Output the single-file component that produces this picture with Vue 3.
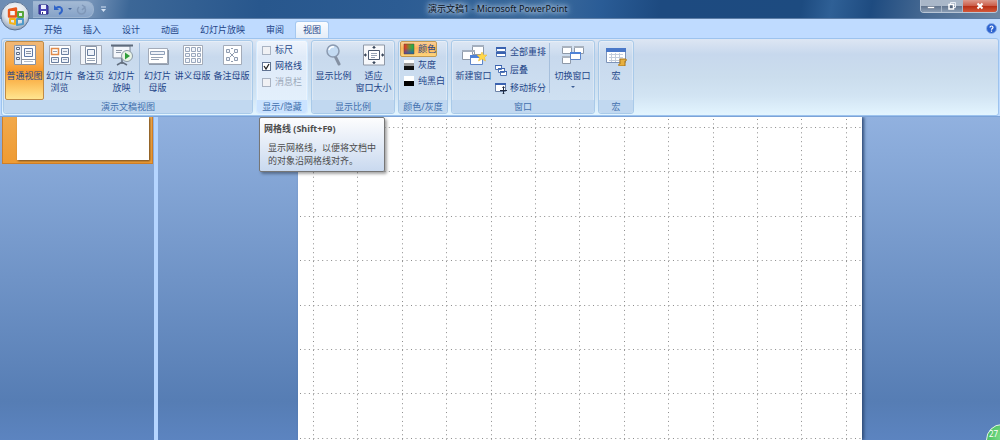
<template>
  <div class="window">
    <header class="titlebar">
      <button class="office" aria-label="Office">
        <svg width="30" height="30" viewBox="0 0 30 30">
          <defs>
            <radialGradient id="orb" cx="50%" cy="35%" r="65%">
              <stop offset="0" stop-color="#ffffff" />
              <stop offset="0.6" stop-color="#dde3ea" />
              <stop offset="1" stop-color="#8f9fb5" />
            </radialGradient>
          </defs>
          <circle cx="15" cy="15" r="14" fill="url(#orb)" stroke="#5d7596" />
          <g fill="none" stroke-width="2.4" stroke-linejoin="round">
            <path d="M9 9l7-1.500v8l-7 0z" stroke="#e8591c" />
            <path d="M18 11h5v5h-5z" stroke="#58a63c" stroke-width="2" />
            <path d="M10 18h5v5l-5-1z" stroke="#f2b31b" stroke-width="2" />
            <path d="M17 18h6v5l-6 1z" stroke="#4f9ac9" stroke-width="2" />
          </g>
        </svg>
      </button>
      <div class="quick">
        <button aria-label="保存">
          <svg width="11" height="11" viewBox="0 0 11 11">
            <path d="M1 1h8l1 1v8H1z" fill="#4a46b4" stroke="#2d2a86" />
            <path d="M3 1h5v4H3z" fill="#e9edfb" />
            <path d="M3 7h5v3H3z" fill="#fff" />
            <path d="M4 8h1v2H4z" fill="#2d2a86" />
          </svg>
        </button>
        <button aria-label="撤消">
          <svg width="11" height="11" viewBox="0 0 11 11">
            <path d="M3 4c3-2 6-1 6 2 0 2-1 3-3 4" fill="none" stroke="#2f64c8" stroke-width="2" />
            <path d="M1 1v5h5z" fill="#2f64c8" />
          </svg>
        </button>
        <i class="caret"></i>
        <button aria-label="重复" disabled>
          <svg width="11" height="11" viewBox="0 0 11 11">
            <path d="M3 3a4 4 0 1 0 5 0M6 1l3 2-3 3" fill="none" stroke="#7f97b8" stroke-width="1.5" />
          </svg>
        </button>
      </div>
      <button class="more" aria-label="自定义快速访问工具栏">
        <svg width="7" height="7" viewBox="0 0 7 7">
          <path d="M1 1h5" stroke="#d4e2f4" />
          <path d="M1 3h5L3.500 6z" fill="#d4e2f4" />
        </svg>
      </button>
      <h1>演示文稿1 - Microsoft PowerPoint</h1>
      <div class="controls">
        <button aria-label="最小化">
          <svg width="10" height="10" viewBox="0 0 10 10"><path d="M1.500 5.500h7v2h-7z" fill="#fff" stroke="#56657a" stroke-width="0.5" /></svg>
        </button>
        <button aria-label="向下还原">
          <svg width="10" height="10" viewBox="0 0 10 10">
            <path d="M3.500 3V1.500h5v5H7" fill="none" stroke="#e6ecf4" />
            <path d="M2 3.500h4.500V8H2z" fill="#55677f" stroke="#fff" stroke-width="1.500" />
          </svg>
        </button>
        <button class="close" aria-label="关闭">
          <svg width="10" height="10" viewBox="0 0 10 10"><path d="M2.500 2.500l5 5M7.500 2.500l-5 5" stroke="#fff" stroke-width="2" /></svg>
        </button>
      </div>
    </header>

    <nav class="tabs">
      <button
        v-for="tab in tabs"
        :key="tab"
        :class="{ active: tab === activeTab }"
        @click="activeTab = tab"
      >
        {{ tab }}
      </button>
      <button class="help" aria-label="帮助">
        <svg width="11" height="11" viewBox="0 0 11 11">
          <circle cx="5.500" cy="5.500" r="5" fill="#2c62cf" stroke="#8fb2ea" />
          <path d="M4 4.500c0-2 3-2 3 0 0 1-1.500 1-1.500 2.200M5.500 7.500v1.300" fill="none" stroke="#fff" stroke-width="1.200" />
        </svg>
      </button>
    </nav>

    <main class="ribbon">
      <section class="group">
        <div class="tools">
          <button class="big wide on">
            <svg width="24" height="22" viewBox="0 0 24 22">
              <path d="M1.500 1.500h21v19h-21z" fill="#fff" stroke="#8a93a3" />
              <path d="M2 2h6v18H2z" fill="#e3e9f3" />
              <path d="M8.500 2v18M9 15.500h13" stroke="#8a93a3" />
              <path d="M11.500 4.500h8v8h-8z" fill="#f4f7fc" stroke="#5f7aa8" />
              <path d="M13 7.500h5M13 9.500h5" stroke="#8a93a3" />
              <path d="M3.500 3.500h3v2h-3zM3.500 8.500h3v2h-3zM3.500 13.500h3v2h-3z" fill="#fff" stroke="#5d6b84" />
              <path d="M11 17.500h9" stroke="#b4bcc8" />
            </svg>
            <span>普通视图</span>
          </button>
          <button class="big">
            <svg width="24" height="22" viewBox="0 0 24 22">
              <path d="M1.500 1.500h21v19h-21z" fill="#fff" stroke="#a3abb8" />
              <path d="M13.500 4.500h7v6h-7zM3.500 13.500h7v5h-7zM13.500 13.500h7v5h-7z" fill="#eef2f9" stroke="#6a7f9f" />
              <path d="M3.500 4.500h7v6h-7z" fill="#fff" stroke="#e08a4a" stroke-width="1.500" />
              <path d="M5 7.500h4M15 7.500h4M5 15.500h4M15 15.500h4" stroke="#97a3b5" />
            </svg>
            <span>幻灯片<br />浏览</span>
          </button>
          <button class="big">
            <svg width="24" height="22" viewBox="0 0 24 22">
              <path d="M1.500 1.500h21v19h-21z" fill="#f2f4f8" stroke="#a3abb8" />
              <path d="M6.500 2.500h11v17h-11z" fill="#fff" stroke="#8995a8" />
              <path d="M8.500 5.500h7v6h-7z" fill="#eef2f9" stroke="#6a7f9f" />
              <path d="M8 14.500h8M8 16.500h8" stroke="#97a3b5" />
            </svg>
            <span>备注页</span>
          </button>
          <button class="big">
            <svg width="24" height="22" viewBox="0 0 24 22">
              <path d="M3 2h17v12H3z" fill="#f3f6fb" stroke="#7d8898" />
              <path d="M1 1.500h22" stroke="#5e6b7c" stroke-width="2" />
              <path d="M6 6.500h6M6 8.500h5" stroke="#8c98a9" />
              <path d="M12 14v6M7 21l5-3 5 3" fill="none" stroke="#626e7e" stroke-width="1.500" />
              <circle cx="17" cy="12" r="5.500" fill="#e9f3e6" stroke="#8a99a6" />
              <path d="M15 8.500l5 3.500-5 3.500z" fill="#2f9e3a" />
            </svg>
            <span>幻灯片<br />放映</span>
          </button>
          <i class="rule"></i>
          <button class="big">
            <svg width="24" height="22" viewBox="0 0 24 22">
              <path d="M2.500 4.500h19v15h-19z" fill="#fff" stroke="#a3abb8" />
              <path d="M4.500 7.500h14v3h-14z" fill="#eef2f9" stroke="#8fa0b8" />
              <path d="M5 13.500h12M5 15.500h8" stroke="#97a3b5" />
              <path d="M3 20.500h19.500V6" fill="none" stroke="#8f9bab" />
            </svg>
            <span>幻灯片<br />母版</span>
          </button>
          <button class="big wide">
            <svg width="24" height="22" viewBox="0 0 24 22">
              <path d="M2.500 1.500h19v19h-19z" fill="#fff" stroke="#a3abb8" />
              <path d="M4.500 3.500h4v4h-4zM10.500 3.500h4v4h-4zM16.500 3.500h3v4h-3zM4.500 9.500h4v3h-4zM10.500 9.500h4v3h-4zM16.500 9.500h3v3h-3zM4.500 14.500h4v4h-4zM10.500 14.500h4v4h-4zM16.500 14.500h3v4h-3z" fill="#f1f4fa" stroke="#9aa8bd" />
            </svg>
            <span>讲义母版</span>
          </button>
          <button class="big wide">
            <svg width="24" height="22" viewBox="0 0 24 22">
              <path d="M3.500 1.500h18v19h-18z" fill="#fff" stroke="#a3abb8" />
              <path d="M6.500 5.500h3v3h-3zM14.500 5.500h3v3h-3zM6.500 13.500h3v3h-3zM14.500 13.500h3v3h-3z" fill="#f1f4fa" stroke="#8f9cb0" />
              <path d="M10 9l4 4M14 9l-4 4M11 4.500h2M11 17.500h2" stroke="#8f9cb0" />
            </svg>
            <span>备注母版</span>
          </button>
        </div>
        <h2>演示文稿视图</h2>
      </section>

      <section class="group hot">
        <div class="tools checks">
          <label><input type="checkbox" />标尺</label>
          <label><input v-model="gridVisible" type="checkbox" />网格线</label>
          <label class="off"><input type="checkbox" disabled />消息栏</label>
        </div>
        <h2>显示/隐藏</h2>
      </section>

      <section class="group">
        <div class="tools">
          <button class="big zoom">
            <svg width="24" height="22" viewBox="0 0 24 22">
              <path d="M13 12l4 8" stroke="#8490a2" stroke-width="3" stroke-linecap="round" />
              <circle cx="11" cy="7" r="6" fill="#c3daf2" stroke="#8b9ab0" stroke-width="1.500" />
              <path d="M7 6a4 4 0 0 1 5-3" fill="none" stroke="#fff" stroke-width="1.500" />
            </svg>
            <span>显示比例</span>
          </button>
          <button class="big wide">
            <svg width="24" height="22" viewBox="0 0 24 22">
              <path d="M1.500 1h21v20h-21z" fill="#f7f8fb" stroke="#8f98a6" />
              <path d="M6.500 6.500h11v9h-11z" fill="#fff" stroke="#4c5a70" />
              <path d="M9 9.500h6M9 11.500h6M9 13.500h4" stroke="#97a3b5" />
              <path d="M12 2v3M12 20v-3M2 11h3M22 11h-3" stroke="#39465a" />
              <path d="M10 4h4l-2-2zM10 18h4l-2 2zM4 9v4l-2-2zM20 9v4l2-2z" fill="#39465a" />
            </svg>
            <span>适应<br />窗口大小</span>
          </button>
        </div>
        <h2>显示比例</h2>
      </section>

      <section class="group">
        <div class="tools stack">
          <button class="small on">
            <svg width="12" height="12" viewBox="0 0 12 12">
              <defs>
                <linearGradient id="hues">
                  <stop offset="0.1" stop-color="#e03a26" />
                  <stop offset="0.5" stop-color="#7f8a2e" />
                  <stop offset="0.9" stop-color="#1fae4c" />
                </linearGradient>
                <linearGradient id="depth" x2="0" y2="1">
                  <stop offset="0.4" stop-color="#2450c8" stop-opacity="0" />
                  <stop offset="1" stop-color="#2450c8" stop-opacity="0.8" />
                </linearGradient>
              </defs>
              <path d="M1 1h10v10H1z" fill="url(#hues)" />
              <path d="M1 1h10v10H1z" fill="url(#depth)" stroke="#5c4a30" stroke-width="0.5" />
            </svg>
            颜色
          </button>
          <button class="small">
            <svg width="12" height="12" viewBox="0 0 12 12">
              <path d="M1 1h10v3H1z" fill="#fff" />
              <path d="M1 4h10v3H1z" fill="#9a9a9a" />
              <path d="M1 7h10v4H1z" fill="#111" />
            </svg>
            灰度
          </button>
          <button class="small">
            <svg width="12" height="12" viewBox="0 0 12 12">
              <path d="M1 1h10v5H1z" fill="#fff" />
              <path d="M1 6h10v5H1z" fill="#000" />
            </svg>
            纯黑白
          </button>
        </div>
        <h2>颜色/灰度</h2>
      </section>

      <section class="group">
        <div class="tools">
          <button class="big zoom">
            <svg width="26" height="22" viewBox="0 0 26 22">
              <path d="M11.500 1.500h11v9h-11zM1.500 6.500h12v9h-12z" fill="#fff" stroke="#8e99a8" />
              <path d="M11 1h12v2H11zM1 6h13v2H1z" fill="#a4afbe" />
              <path d="M9.500 12.500h12v8h-12z" fill="#fff" stroke="#5f86c8" />
              <path d="M9 11h13v3H9z" fill="#4f83d8" />
              <path d="M21 8l1.500 3 3.500 0-2.500 2.500 1 3.500-3.500-2-3.500 2 1-3.500L16 11l3.500 0z" fill="#ffd84a" stroke="#e9b52c" stroke-width="0.5" />
            </svg>
            <span>新建窗口</span>
          </button>
          <div class="stack loose">
            <button class="small">
              <svg width="12" height="12" viewBox="0 0 12 12">
                <path d="M1.500 1.500h9v4h-9zM1.500 6.500h9v4h-9z" fill="#fff" stroke="#5276b4" />
                <path d="M1 1h10v2H1zM1 6h10v2H1z" fill="#3a62b0" />
              </svg>
              全部重排
            </button>
            <button class="small">
              <svg width="12" height="12" viewBox="0 0 12 12">
                <path d="M.5 1.500h6v4h-6zM3.500 4.500h6v4h-6zM5.500 7.500h6v4h-6z" fill="#fff" stroke="#5276b4" />
                <path d="M0 1h7v1H0zM3 4h7v1H3zM5 7h7v1H5z" fill="#3a62b0" />
              </svg>
              层叠
            </button>
            <button class="small">
              <svg width="12" height="12" viewBox="0 0 12 12">
                <path d="M.5 1.500h10v8H.5z" fill="#fff" stroke="#6d82a6" />
                <path d="M0 1h11v2H0z" fill="#3a62b0" />
                <path d="M8.500 5v7M5 8.500h7" stroke="#1f2b42" />
                <path d="M7 6h3L8.500 4zM7 11h3l-1.500 1z" fill="#1f2b42" />
              </svg>
              移动拆分
            </button>
          </div>
          <i class="rule"></i>
          <button class="big zoom">
            <svg width="24" height="22" viewBox="0 0 24 22">
              <path d="M1.500 2.500h9v7h-9zM13.500 2.500h9v7h-9zM1.500 12.500h8v7h-8z" fill="#fff" stroke="#8e99a8" />
              <path d="M1 2h10v2H1zM13 2h10v2H13zM1 12h9v2H1z" fill="#a9b2be" />
              <path d="M9.500 8.500h10v7h-10z" fill="#fff" stroke="#5f86c8" />
              <path d="M9 8h11v2H9z" fill="#4f83d8" />
            </svg>
            <span>切换窗口</span>
            <i class="caret"></i>
          </button>
        </div>
        <h2>窗口</h2>
      </section>

      <section class="group">
        <div class="tools">
          <button class="big macro">
            <svg width="24" height="22" viewBox="0 0 24 22">
              <path d="M2.500 4.500h19v14h-19z" fill="#fff" stroke="#7d93b8" />
              <path d="M2 4h20v4H2z" fill="#4a78c8" />
              <path d="M5 10.500h14M5 13.500h14M5 16.500h10M7.500 9v9M11.500 9v9M15.500 9v9" stroke="#c3cddc" />
              <path d="M16 15h5c2 0 2 2 0 2v5h-5c-2 0-2-2 0-2z" fill="#e7b040" stroke="#a8741a" />
            </svg>
            <span>宏</span>
          </button>
        </div>
        <h2>宏</h2>
      </section>
    </main>

    <div class="workspace">
      <aside class="slides">
        <div class="thumb"><div class="page"></div></div>
      </aside>
      <div class="editor">
        <div class="slide">
          <svg v-if="gridVisible" class="grid" width="100%" height="100%">
            <line v-for="n in 13" :key="'v' + n" :x1="gridX(n)" y1="2" :x2="gridX(n)" y2="100%" />
            <line v-for="n in 8" :key="'h' + n" x1="2" :y1="gridY(n)" x2="100%" :y2="gridY(n)" />
          </svg>
        </div>
      </div>
      <div class="tooltip" role="tooltip">
        <strong>网格线 (Shift+F9)</strong>
        <p>显示网格线，以便将文档中的对象沿网格线对齐。</p>
      </div>
      <div class="badge">27</div>
    </div>
  </div>
</template>

<script setup>
import { ref } from "vue";

const tabs = ["开始", "插入", "设计", "动画", "幻灯片放映", "审阅", "视图"];
const activeTab = ref("视图");
const gridVisible = ref(true);

// Grid spacing: ten dots per cell
const cell = 44.4;

function gridX(n) {
  return Math.round(15 + (n - 1) * cell) + 0.5;
}

function gridY(n) {
  return Math.round(10 + (n - 1) * cell) + 0.5;
}
</script>

<style>
body {
  background: #5b82bd;
  overflow: hidden;
}
</style>

<style scoped>
.window {
  display: flex;
  flex-direction: column;
  height: 100vh;
  background: #bfdbff;
  font-family: "Noto Sans", "Noto Sans CJK SC", sans-serif;
  font-size: 9px;
  line-height: 12px;
  color: #1e4588;
}

button {
  margin: 0;
  padding: 0;
  border: 0;
  background: none;
  font: inherit;
  color: inherit;
}

svg {
  display: block;
  flex: none;
}

h1,
h2,
p {
  margin: 0;
  font-size: inherit;
  font-weight: normal;
}

.caret {
  border: 2px solid transparent;
  border-top-color: #3d5f96;
  border-bottom: 0;
}

/* --- Title bar --- */
.titlebar {
  position: relative;
  display: flex;
  align-items: center;
  height: 18px;
  flex: none;
  border-bottom: 1px solid #5c7da6;
  background: linear-gradient(100deg, #6d8db4 0, #7593b8 9%, #3c6797 13%, #28578d 26%, #2c5c93 40%, #3a689b 55%, #2a5c96 60%, #1d4a80 66%, #1d4b80 80%, #2f6096 83%, #1e4b80 87%, #4a6c94 93%, #6d86a3 100%);
}

.office {
  position: absolute;
  top: 1px;
  left: 0;
  z-index: 2;
}

.quick {
  display: flex;
  align-items: center;
  gap: 4px;
  height: 15px;
  margin-left: 33px;
  padding: 0 6px 0 5px;
  border: 1px solid #9db4d0;
  border-left: 0;
  border-radius: 0 8px 8px 0;
  background: linear-gradient(#a3b9d4, #86a3c8);
}

.more {
  margin-left: 6px;
}

.titlebar h1 {
  flex: 1;
  padding-left: 321px;
  white-space: nowrap;
  color: #0c1422;
  text-shadow: 0 0 4px #c5d6ea, 0 0 6px #c5d6ea, 0 0 8px #a9c1dd;
}

.controls {
  display: flex;
  align-self: flex-start;
  margin-right: 2px;
  border: 1px solid #b9c6d6;
  border-top: 0;
  border-radius: 0 0 4px 4px;
  overflow: hidden;
}

.controls button {
  display: flex;
  align-items: center;
  justify-content: center;
  width: 21px;
  height: 12px;
  border-right: 1px solid #a8b6c8;
  background: linear-gradient(#a9b7c8 50%, #60738c 50%, #8a9db4);
}

.controls .close {
  width: 34px;
  border-right: 0;
  background: linear-gradient(#dd9a8c 0, #cb5b46 50%, #b52d14 50%, #d4593a);
}

/* --- Tabs --- */
.tabs {
  display: flex;
  align-items: flex-end;
  gap: 1px;
  height: 19px;
  flex: none;
  padding: 0 3px 0 34px;
}

.tabs button {
  height: 17px;
  padding: 0 9px;
  border: 1px solid transparent;
  border-bottom: 0;
  border-radius: 3px 3px 0 0;
}

.tabs .active {
  padding: 0 7px;
  border-color: #a5c8f0;
  background: linear-gradient(#fafcff, #e4edf8);
}

.tabs .help {
  align-self: center;
  height: 11px;
  margin-left: auto;
  padding: 0;
  border: 0;
}

/* --- Ribbon --- */
.ribbon {
  display: flex;
  flex: none;
  gap: 3px;
  margin: 0 1px;
  padding: 1px;
  border: 1px solid #9dc3ee;
  border-radius: 3px;
  background: linear-gradient(#dde6f3 0, #c7d8ed 20%, #cbdded 50%, #d2e4f3 75%, #e3f5ff 100%);
}

.group {
  display: flex;
  flex-direction: column;
  border: 1px solid #a9cae9;
  border-radius: 3px;
  background: linear-gradient(#dde7f4 0, #c8d9ed 22%, #d0e2f3 100%);
  box-shadow: inset 0 0 0 1px rgba(255, 255, 255, 0.3);
}

.group.hot {
  border-color: #d5ebff;
  background: linear-gradient(#f0f5fc 0, #dfeaf8 22%, #e4f1fd 100%);
}

.group h2 {
  height: 13px;
  border-radius: 0 0 3px 3px;
  background: #c1d8f0;
  text-align: center;
  line-height: 13px;
  color: #4270ae;
}

.group.hot h2 {
  background: #cbe3ff;
}

.tools {
  display: flex;
  box-sizing: border-box;
  height: 59px;
  padding: 0 1px;
}

.big {
  display: flex;
  flex-direction: column;
  align-items: center;
  box-sizing: border-box;
  width: 31px;
  height: 59px;
  padding-top: 3px;
  white-space: nowrap;
}

.big span {
  margin-top: 4px;
}

.big .caret {
  margin-top: 4px;
}

.wide {
  width: 39px;
}

.zoom {
  width: 41px;
}

.macro {
  width: 32px;
}

.on {
  border: 1px solid #c08b45;
  border-radius: 2px;
  background: linear-gradient(#f0b877 0, #f8a848 38%, #f79a2c 50%, #fed070 85%, #ffe590 100%);
}

.big.on {
  padding-top: 2px;
}

.rule {
  width: 1px;
  height: 50px;
  margin: 2px 2px;
  background: #a6bfdc;
}

.checks {
  flex-direction: column;
  padding: 1px 5px;
}

.checks label {
  display: flex;
  align-items: center;
  gap: 4px;
  height: 16px;
}

.checks input {
  appearance: none;
  width: 9px;
  height: 9px;
  margin: 0;
  border: 1px solid #a9b3c2;
  background: #f0f1f4;
}

.checks input:checked {
  border-color: #5f7291;
  background: #fff url("data:image/svg+xml,%3Csvg xmlns='http://www.w3.org/2000/svg' viewBox='0 0 7 7'%3E%3Cpath d='M1 3l2 3 3-5' fill='none' stroke='%23222' stroke-width='1.300'/%3E%3C/svg%3E");
}

.off {
  color: #9aa7b8;
}

.stack {
  display: flex;
  flex-direction: column;
  align-items: flex-start;
}

.small {
  display: flex;
  align-items: center;
  gap: 3px;
  height: 16px;
  padding: 0 0 0 2px;
  border: 1px solid transparent;
  white-space: nowrap;
}

.small.on {
  border-color: #c39a52;
  background: linear-gradient(#fbd09a, #fbb559 45%, #fed57c);
}

.loose {
  padding-top: 2px;
}

.loose .small {
  height: 18px;
  padding: 0;
}

/* --- Workspace --- */
.workspace {
  position: relative;
  display: flex;
  flex: 1;
  min-height: 0;
  overflow: hidden;
  border-top: 1px solid #7ba3d8;
  background: linear-gradient(#91b1df 0, #567db4 88%, #5c84c0 100%);
}

.slides {
  width: 152px;
  padding-left: 2px;
  border-right: 4px solid #b5d5ff;
}

.thumb {
  margin-right: 1px;
  padding: 0 3px 3px 14px;
  border: 1px solid #cf7f28;
  border-top: 0;
  background: linear-gradient(#f2a94a, #ee9b33);
}

.page {
  height: 43px;
  background: #fff;
  box-shadow: 1px 1px 2px #6b4a20;
}

.editor {
  display: flex;
  flex: 1;
  padding: 0 138px 0 140px;
}

.slide {
  flex: 1;
  background: #fff;
  box-shadow: 2px 0 3px #2f4c78;
}

.grid line {
  stroke: #8c8c8c;
  stroke-dasharray: 1 3.44;
}

.tooltip {
  position: absolute;
  top: 0;
  left: 259px;
  width: 126px;
  box-sizing: border-box;
  padding: 4px 3px 4px 4px;
  border: 1px solid #767676;
  border-radius: 2px;
  background: linear-gradient(#fdfdfe, #c9d9ef);
  box-shadow: 2px 2px 3px rgba(0, 0, 0, 0.35);
  color: #4c4c4c;
  line-height: 13px;
}

.tooltip strong {
  display: block;
}

.tooltip p {
  margin: 6px 4px 0;
}

.badge {
  position: absolute;
  right: -18px;
  bottom: -16px;
  width: 32px;
  height: 32px;
  box-sizing: border-box;
  padding: 3px 0 0 2px;
  border: 1px solid #e4f5e6;
  border-radius: 50%;
  background: radial-gradient(circle at 50% 40%, #7fe08c, #2fae4c);
  font-size: 8px;
  color: #fff;
}
</style>
